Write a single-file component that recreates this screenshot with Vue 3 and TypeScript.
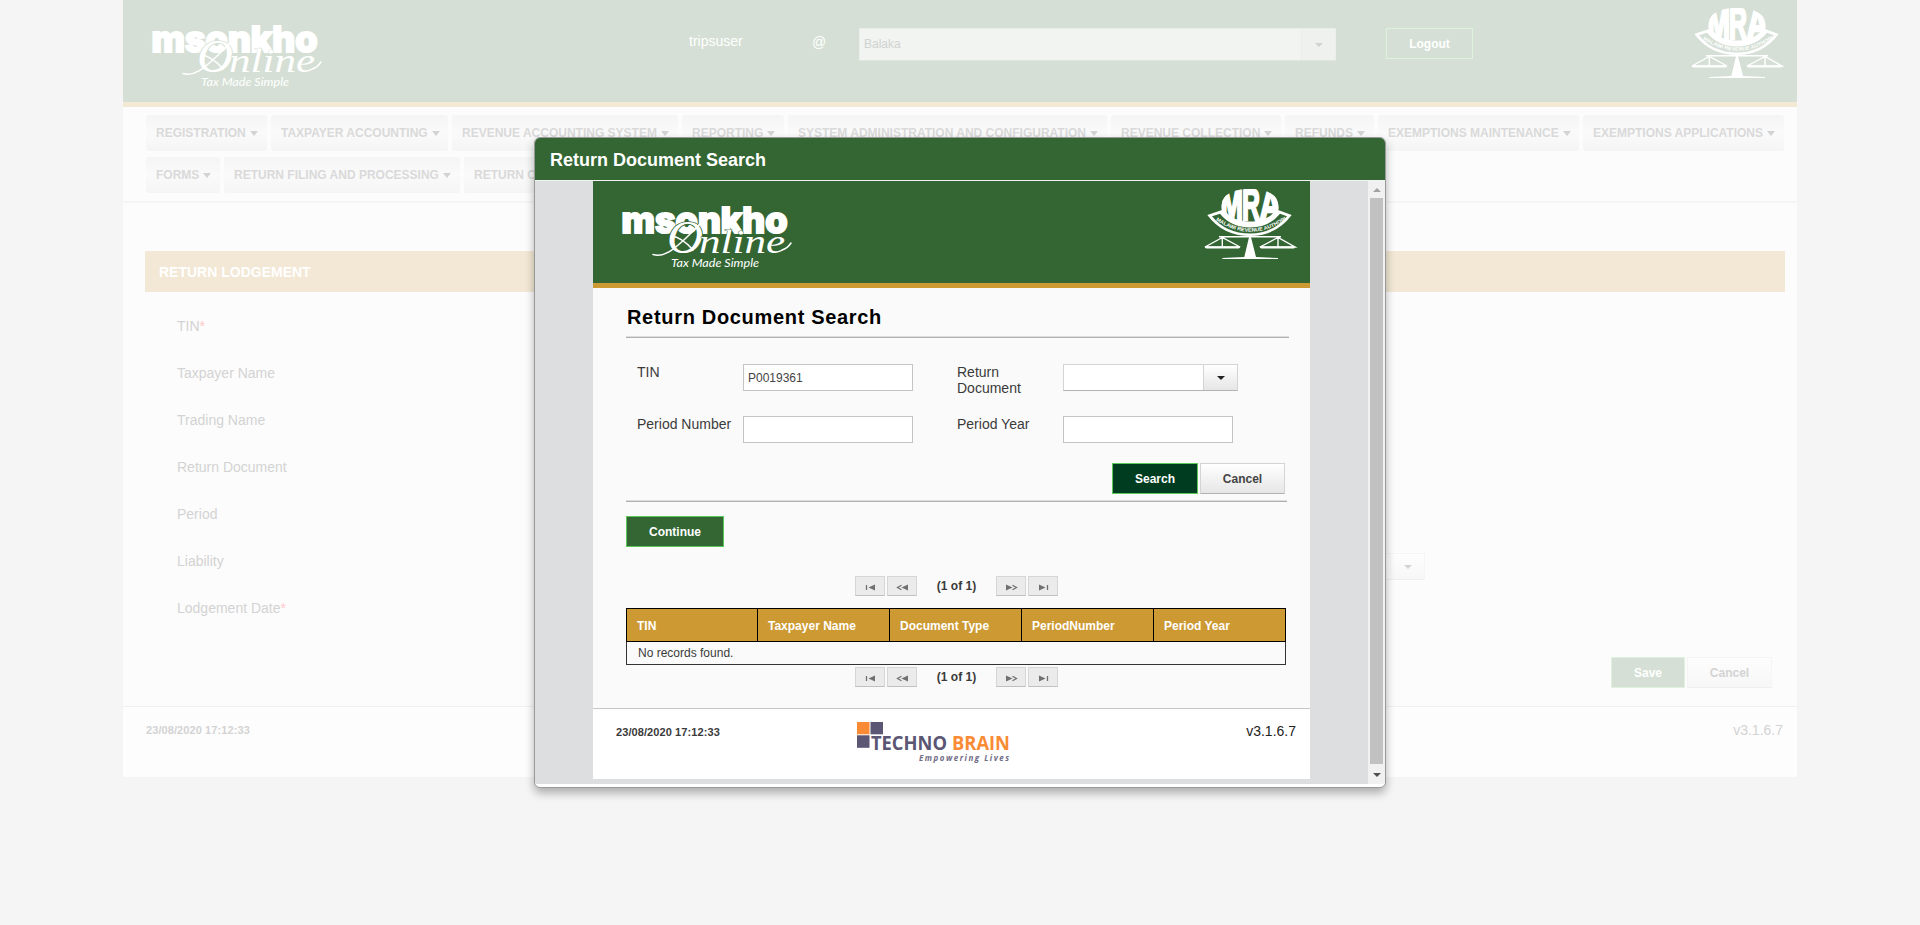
<script setup lang="ts">
interface NavItem {
  label: string
  width: number
}

const navRows: NavItem[][] = [
  [
    { label: 'REGISTRATION', width: 121 },
    { label: 'TAXPAYER ACCOUNTING', width: 177 },
    { label: 'REVENUE ACCOUNTING SYSTEM', width: 226 },
    { label: 'REPORTING', width: 102 },
    { label: 'SYSTEM ADMINISTRATION AND CONFIGURATION', width: 319 },
    { label: 'REVENUE COLLECTION', width: 170 },
    { label: 'REFUNDS', width: 89 },
    { label: 'EXEMPTIONS MAINTENANCE', width: 201 },
    { label: 'EXEMPTIONS APPLICATIONS', width: 201 },
  ],
  [
    { label: 'FORMS', width: 74 },
    { label: 'RETURN FILING AND PROCESSING', width: 236 },
    { label: 'RETURN CORRECTION', width: 168 },
  ],
]

const lodgementFields = [
  { label: 'TIN', required: true },
  { label: 'Taxpayer Name', required: false },
  { label: 'Trading Name', required: false },
  { label: 'Return Document', required: false },
  { label: 'Period', required: false },
  { label: 'Liability', required: false },
  { label: 'Lodgement Date', required: true },
]

const columns = ['TIN', 'Taxpayer Name', 'Document Type', 'PeriodNumber', 'Period Year']
const pagerPositions = ['top', 'bottom']
const timestamp = '23/08/2020 17:12:33'
const version = 'v3.1.6.7'
</script>

<template>
  <div class="screen">
    <svg class="defs" width="0" height="0" aria-hidden="true">
      <defs>
        <clipPath id="crest-clip"><path d="M17.500 18C17.500 5 30 0 46 0S74.500 5 74.500 18C74.500 29 62 37 46 37S17.500 29 17.500 18Z" /></clipPath>
        <path id="banner-arc" d="M10 30 Q46 55.500 83 30" />
        <symbol id="msonkho" viewBox="0 0 176 66" overflow="visible">
          <text
            x="0.500" y="26.300" fill="#fff" stroke="#fff" stroke-width="2.200"
            font-family="Inter, Roboto, sans-serif" font-weight="800" font-size="35.500"
            textLength="166" lengthAdjust="spacingAndGlyphs"
          >msonkho</text>
          <g fill="#fff" font-family="'Liberation Serif', serif" font-style="italic">
            <text
              x="46" y="45.500" font-size="46" textLength="36" lengthAdjust="spacingAndGlyphs"
              stroke="currentColor" stroke-width="1.600" paint-order="stroke"
            >O</text>
            <text
              x="78" y="45.500" font-size="34" textLength="86" lengthAdjust="spacingAndGlyphs"
              stroke="currentColor" stroke-width="0.800" paint-order="stroke"
            >nline</text>
          </g>
          <path
            d="M32 47.500 C44 51 54 41 65 31 C72 24 79 18 82 13 M50 29 C59 30 66 36 72 43 M161 43 C165 42 168 39 170 36"
            fill="none" stroke="#fff" stroke-width="1.500" stroke-linecap="round"
          />
          <text
            x="50" y="60" fill="#fff" font-family="Lato, sans-serif" font-style="italic" font-size="11.500"
            textLength="88" lengthAdjust="spacingAndGlyphs"
          >Tax Made Simple</text>
        </symbol>
        <symbol id="mra" viewBox="0 0 92 70" overflow="visible">
          <path d="M3.300 26 L18 21 Q26 36 46 36.500 Q66 36 74 21 L87.700 26 Q72 47 46 47 Q19 47 3.300 26Z" fill="#fff" />
          <path d="M8 27.200 L16 24.800 Q27 38.500 46 38.500 Q65 38.500 76 24.800 L83 27.200 Q69 44.500 46 44.500 Q22 44.500 8 27.200Z" fill="currentColor" />
          <path d="M17.500 18C17.500 5 30 0 46 0S74.500 5 74.500 18C74.500 29 62 37 46 37S17.500 29 17.500 18Z" fill="#fff" />
          <path d="M19.500 16C20 4 30 -2 46 -2S72 4 72.500 16C72 26 60 32.500 46 32.500S20 26 19.500 16Z" fill="currentColor" />
          <g clip-path="url(#crest-clip)" fill="#fff" stroke="#fff" stroke-width="2.400" font-family="'Liberation Sans', sans-serif" font-weight="bold" font-size="44">
            <text x="16.500" y="30.500" textLength="22.500" lengthAdjust="spacingAndGlyphs">M</text>
            <text x="38" y="30.500" textLength="18" lengthAdjust="spacingAndGlyphs">R</text>
            <text x="55.500" y="30.500" textLength="22" lengthAdjust="spacingAndGlyphs">A</text>
          </g>
          <text fill="#fff" font-family="'Liberation Sans', sans-serif" font-weight="bold" font-size="5.200">
            <textPath href="#banner-arc" startOffset="2" textLength="83" lengthAdjust="spacingAndGlyphs">MALAWI REVENUE AUTHORITY</textPath>
          </text>
          <path d="M15 47.700H77M18.300 48.500L1 58H36L18.300 48.500V58M74 48.500L56 58H91L74 48.500V58" fill="none" stroke="#fff" stroke-width="1.400" />
          <path d="M0.500 57.500H36.500L35 59.500H2ZM55.500 57.500H91.500L90 59.500H57Z" fill="#fff" />
          <path d="M45.300 47H46.700L52 68L74 69V70H18.300V69L40.300 68Z" fill="#fff" />
        </symbol>
      </defs>
    </svg>

    <main class="page">
      <header class="banner faded">
        <svg class="word-logo"><use href="#msonkho" width="176" height="66" /></svg>
        <span class="user">tripsuser</span>
        <span class="at">@</span>
        <div class="office">
          <span class="office-name">Balaka</span>
          <span class="office-toggle"><i class="caret" /></span>
        </div>
        <button class="logout">Logout</button>
        <svg class="crest-logo"><use href="#mra" width="92" height="70" /></svg>
      </header>

      <nav class="nav">
        <div v-for="(row, r) in navRows" :key="r" class="nav-row">
          <a v-for="item in row" :key="item.label" class="nav-item" :style="{ width: item.width + 'px' }">
            {{ item.label }}<i class="caret" />
          </a>
        </div>
      </nav>

      <section class="lodgement">
        <h2 class="bar">RETURN LODGEMENT</h2>
        <div class="fields">
          <div v-for="field in lodgementFields" :key="field.label" class="field">
            <span class="field-label">{{ field.label }}<b v-if="field.required" class="star">*</b></span>
            <div v-if="field.label === 'Liability'" class="liability">
              <span class="liability-toggle"><i class="caret" /></span>
            </div>
          </div>
        </div>
        <div class="lodgement-actions">
          <button class="btn pale-primary">Save</button>
          <button class="btn pale">Cancel</button>
        </div>
      </section>

      <footer class="page-footer">
        <span class="stamp">{{ timestamp }}</span>
        <span>{{ version }}</span>
      </footer>
    </main>

    <div class="dialog">
      <div class="dialog-title">Return Document Search</div>
      <div class="frame">
        <div class="sheet">
          <header class="banner">
            <svg class="word-logo"><use href="#msonkho" width="176" height="66" /></svg>
            <svg class="crest-logo"><use href="#mra" width="92" height="70" /></svg>
          </header>
          <div class="content">
            <h1>Return Document Search</h1>
            <hr class="rule wide">
            <div class="form">
              <label>TIN</label>
              <input type="text" value="P0019361">
              <label>Return Document</label>
              <div class="combo"><span class="combo-toggle"><i class="caret" /></span></div>
              <label>Period Number</label>
              <input type="text">
              <label>Period Year</label>
              <input type="text">
            </div>
            <div class="form-actions">
              <button class="btn search">Search</button>
              <button class="btn cancel">Cancel</button>
            </div>
            <hr class="rule">
            <button class="btn continue">Continue</button>
            <div class="results">
              <template v-for="position in pagerPositions" :key="position">
                <div class="pager">
                  <button><svg width="11" height="7"><path d="M1.500 1V6" /><path class="fill" d="M10 .5V6.500L3.500 3.500Z" /></svg></button>
                  <button><svg width="13" height="7"><path d="M5.500 1.200L1.500 3.500L5.500 5.800" /><path class="fill" d="M12 .5V6.500L5.500 3.500Z" /></svg></button>
                  <span>(1 of 1)</span>
                  <button><svg width="13" height="7"><path class="fill" d="M1 .5V6.500L7.500 3.500Z" /><path d="M7.500 1.200L11.500 3.500L7.500 5.800" /></svg></button>
                  <button><svg width="11" height="7"><path class="fill" d="M1 .5V6.500L7.500 3.500Z" /><path d="M9.500 1V6" /></svg></button>
                </div>
                <table v-if="position === 'top'">
                  <thead>
                    <tr><th v-for="column in columns" :key="column">{{ column }}</th></tr>
                  </thead>
                  <tbody>
                    <tr><td :colspan="columns.length">No records found.</td></tr>
                  </tbody>
                </table>
              </template>
            </div>
          </div>
          <footer class="sheet-footer">
            <span class="stamp">{{ timestamp }}</span>
            <svg class="vendor" width="153" height="42" viewBox="0 0 153 42">
              <rect width="12.500" height="12.300" fill="#f98b35" />
              <rect x="13.500" width="12.500" height="12.300" fill="#5a5673" />
              <rect y="13.300" width="12.500" height="12.500" fill="#5a5673" />
              <g font-family="'Open Sans', 'Noto Sans', sans-serif" font-weight="bold">
                <text x="14" y="27.800" font-size="19.500" fill="#5a5673" textLength="76" lengthAdjust="spacingAndGlyphs">TECHNO</text>
                <text x="95" y="27.800" font-size="19.500" fill="#f98b35" textLength="58" lengthAdjust="spacingAndGlyphs">BRAIN</text>
                <text x="62" y="38.500" font-size="8" font-style="italic" fill="#6f6b85" textLength="90">Empowering Lives</text>
              </g>
            </svg>
            <span class="version">{{ version }}</span>
          </footer>
        </div>
        <div class="scrollbar">
          <i class="arrow up" />
          <div class="thumb" />
          <i class="arrow down" />
        </div>
      </div>
    </div>
  </div>
</template>

<style>
body {
  margin: 0;
  background: #f5f5f5;
}
</style>

<style scoped>
* {
  box-sizing: border-box;
}

.screen {
  position: relative;
  height: 925px;
  overflow: hidden;
  background: #f5f5f5;
  color: #3a3a3a;
  font: 14px/16px Arial, 'Liberation Sans', sans-serif;
}

.defs {
  position: absolute;
}

button,
input {
  font: inherit;
  margin: 0;
}

.page {
  display: flex;
  flex-direction: column;
  width: 1674px;
  height: 777px;
  margin-left: 123px;
  background: #fcfcfc;
  color: #d3d3d3;
}

.banner {
  display: flex;
  align-items: flex-start;
  height: 107px;
  flex: none;
  padding-left: 28px;
  background: #336633;
  border-bottom: 5px solid #cc9933;
  color: #336633;
}

.banner.faded {
  background: #d5dfd5;
  border-color: #f4e9d5;
  color: #d5dfd5;
}

.word-logo {
  width: 176px;
  height: 66px;
  margin-top: 26px;
  overflow: visible;
}

.crest-logo {
  width: 92px;
  height: 70px;
  margin: 8px 14px 0 auto;
  overflow: visible;
}

.user {
  width: 123px;
  margin: 33px 0 0 362px;
  color: #fff;
}

.at {
  width: 47px;
  margin-top: 34px;
  color: #fff;
}

.office {
  display: flex;
  width: 477px;
  height: 33px;
  margin-top: 28px;
  border: 1px solid #e9eeea;
  border-bottom-color: #e0e6e0;
  background: #f1f4f1;
  color: #d0d3d0;
  font-size: 12px;
  line-height: 31px;
}

.office-name {
  flex: 1;
  padding-left: 4px;
}

.office-toggle,
.combo-toggle,
.liability-toggle {
  display: flex;
  align-items: center;
  justify-content: center;
  width: 34px;
  border-left: 1px solid #eaedea;
  background: #eff1ef;
}

.caret {
  display: inline-block;
  width: 0;
  height: 0;
  border: solid transparent;
  border-width: 4px 4px 0;
  border-top-color: currentColor;
}

.logout {
  width: 87px;
  height: 31px;
  margin: 28px 0 0 50px;
  padding: 0;
  border: 1px solid #dbf3db;
  background: transparent;
  color: #fff;
  font-size: 12px;
  font-weight: bold;
}

.nav {
  height: 96px;
  padding: 8px 0 0 23px;
  border-bottom: 2px solid #f5f5f5;
}

.nav-row {
  display: flex;
  gap: 4px;
  margin-bottom: 6px;
}

.nav-item {
  flex: none;
  height: 36px;
  padding-left: 10px;
  border-radius: 3px;
  background: linear-gradient(#f5f5f5, #fafafa 50%, #f5f5f5);
  color: #d9d9d9;
  font-size: 12px;
  font-weight: bold;
  line-height: 36px;
  white-space: nowrap;
}

.nav-item .caret {
  margin-left: 4px;
  border-width: 5px 4px 0;
  border-top-color: #d3d3d3;
  vertical-align: 1px;
}

.lodgement {
  height: 503px;
  padding: 48px 12px 0 22px;
}

.bar {
  height: 41px;
  margin: 0;
  padding-left: 14px;
  background: #f3e8d5;
  color: #fff;
  font-size: 14px;
  line-height: 42px;
}

.fields {
  padding: 26px 0 0 32px;
}

.field {
  display: flex;
  height: 47px;
}

.field-label {
  width: 1073px;
}

.star {
  color: #fccaca;
  font-weight: normal;
}

.liability {
  display: flex;
  justify-content: flex-end;
  width: 175px;
  height: 27px;
  border: 1px solid #f5f5f5;
  border-bottom-color: #eee;
  background: #fdfdfd;
}

.liability-toggle {
  border-color: #f5f5f5;
  background: linear-gradient(#fdfdfd, #f7f7f7);
}

.lodgement-actions {
  display: flex;
  gap: 2px;
  justify-content: flex-end;
  padding: 10px 13px 0 0;
}

.btn {
  height: 31px;
  padding: 0;
  border: 1px solid #d4d4d4;
  font-size: 12px;
  font-weight: bold;
}

.pale-primary {
  width: 74px;
  background: #d5dfd5;
  border-color: #def2de;
  color: #fff;
}

.pale {
  width: 85px;
  border-color: #f5f5f5;
  border-bottom-color: #eee;
  background: linear-gradient(#fdfdfd, #f7f7f7);
  color: #d3d3d3;
}

.page-footer {
  display: flex;
  justify-content: space-between;
  flex: 1;
  padding: 15px 14px 0 23px;
  border-top: 1px solid #f0f0f0;
  background: #fdfdfd;
}

.stamp {
  font-size: 11px;
  font-weight: bold;
  letter-spacing: 0.09px;
}

.dialog {
  position: absolute;
  left: 534px;
  top: 137px;
  width: 852px;
  height: 651px;
  overflow: hidden;
  border: 1px solid #999;
  border-radius: 6px;
  background: #fff;
  box-shadow: 0 5px 10px rgba(0, 0, 0, 0.3);
}

.dialog-title {
  height: 43px;
  padding-left: 15px;
  border-bottom: 1px solid #f3f3f3;
  background: #336633;
  color: #fff;
  font-size: 18px;
  font-weight: bold;
  line-height: 44px;
}

.frame {
  display: flex;
  justify-content: space-between;
  height: 603px;
  background: #dddee0;
}

.sheet {
  display: flex;
  flex-direction: column;
  width: 717px;
  height: 598px;
  margin-left: 58px;
  background: #fafafa;
}

.content {
  height: 420px;
  padding: 18px 0 0 33px;
}

h1 {
  margin: 0;
  padding-left: 1px;
  color: #000;
  font-size: 20px;
  line-height: 23px;
  letter-spacing: 0.68px;
}

.rule {
  width: 661px;
  height: 2px;
  margin: 6px 0 0;
  border: 0;
  border-top: 1px solid #ddd;
  background: #b0b0b0;
}

.rule.wide {
  width: 663px;
  margin-top: 7px;
}

.form {
  display: grid;
  grid-template-columns: 106px 214px 106px 175px;
  grid-template-rows: 52px 27px;
  padding: 26px 0 0 11px;
}

.form label {
  padding-right: 4px;
}

input {
  width: 170px;
  height: 27px;
  padding: 0 4px;
  border: 1px solid #c4c4c4;
  border-radius: 0;
  background: #fff;
  color: #444;
  font-size: 12px;
}

.combo {
  display: flex;
  justify-content: flex-end;
  height: 27px;
  border: 1px solid #d4d4d4;
  border-bottom-color: #b2b2b2;
  background: #fff;
}

.combo-toggle {
  border-color: #d4d4d4;
  background: linear-gradient(#fff, #e6e6e6);
  color: #222;
}

.form-actions {
  display: flex;
  gap: 2px;
  margin: 20px 0 0 486px;
}

.search {
  width: 86px;
  border-color: #5bc85b;
  background: #003d20;
  color: #fff;
}

.cancel {
  width: 85px;
  border-bottom-color: #b2b2b2;
  background: linear-gradient(#fff, #e6e6e6);
  color: #444;
}

.continue {
  display: block;
  width: 98px;
  margin-top: 14px;
  border-color: #5bc85b;
  background: #336633;
  color: #fff;
}

.results {
  width: 660px;
  padding-top: 29px;
}

.pager {
  display: flex;
  gap: 2px;
  height: 20px;
  padding-left: 229px;
  font-size: 12px;
  font-weight: bold;
  line-height: 20px;
}

.pager button {
  display: flex;
  align-items: center;
  justify-content: center;
  width: 30px;
  height: 20px;
  padding: 3px 0 0 1px;
  border: 1px solid #d6d6d6;
  border-bottom-color: #c0c0c0;
  background: #ebebeb;
}

.pager span {
  width: 75px;
  text-align: center;
}

.pager path {
  fill: none;
  stroke: #707070;
  stroke-width: 1.3;
}

.pager .fill {
  fill: #707070;
  stroke: none;
}

table {
  width: 660px;
  margin: 12px 0 2px;
  border-collapse: collapse;
  table-layout: fixed;
  font-size: 12px;
}

th {
  height: 33px;
  padding: 1px 10px 0;
  border: 1px solid #000;
  background: #cc9933;
  color: #fff;
  text-align: left;
}

th:first-child {
  width: 131px;
}

td {
  height: 23px;
  padding: 0 10px 1px 11px;
  border: 1px solid #333;
}

.sheet-footer {
  display: flex;
  align-items: flex-start;
  flex: 1;
  padding: 13px 14px 0 23px;
  border-top: 1px solid #c5c5c5;
  background: #fff;
}

.sheet-footer .stamp {
  width: 241px;
  margin-top: 2px;
}

.version {
  margin: 1px 0 0 auto;
  color: #222;
}

.scrollbar {
  display: flex;
  flex-direction: column;
  align-items: center;
  width: 17px;
  background: #f1f1f1;
}

.thumb {
  width: 13px;
  flex: 1;
  background: #c1c1c1;
}

.arrow {
  width: 0;
  height: 0;
  border: solid transparent;
}

.up {
  margin: 7px 0 6px;
  border-width: 0 4px 4px;
  border-bottom-color: #a3a3a3;
}

.down {
  margin: 9px 0 7px;
  border-width: 4px 4px 0;
  border-top-color: #505050;
}
</style>
